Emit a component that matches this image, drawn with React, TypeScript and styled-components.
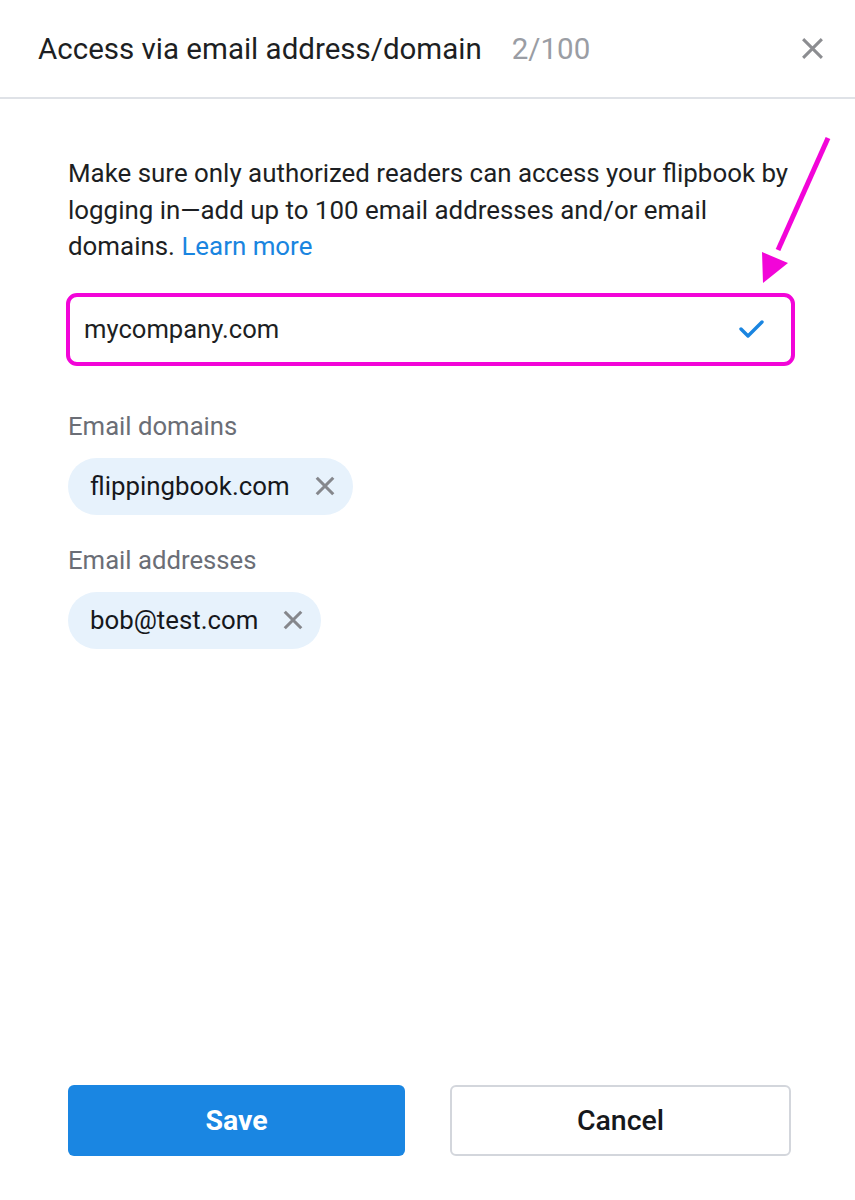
import { createGlobalStyle, styled } from "styled-components";

const GlobalStyle = createGlobalStyle`
  html, body {
    margin: 0;
    padding: 0;
    background: #fff;
  }
  body {
    font-family: Roboto, "Liberation Sans", sans-serif;
    color: #1d1f23;
  }
  * {
    box-sizing: border-box;
  }
`;

const Dialog = styled.div`
  position: relative;
  width: 855px;
  height: 1200px;
  display: flex;
  flex-direction: column;
  background: #fff;
`;

const Header = styled.header`
  height: 99px;
  flex-shrink: 0;
  display: flex;
  align-items: center;
  padding: 0 30px 0 38px;
  border-bottom: 2px solid #dfe2e7;
`;

const Title = styled.h1`
  margin: 0;
  font-size: 29.5px;
  font-weight: 400;
  color: #1d1f23;
`;

const Counter = styled.span`
  margin-left: 30px;
  font-size: 29.5px;
  color: #9a9da4;
`;

const CloseButton = styled.button`
  margin-left: auto;
  border: none;
  background: none;
  padding: 0;
  width: 26px;
  height: 26px;
  display: flex;
  align-items: center;
  justify-content: center;
  color: #8c8d91;
  cursor: pointer;
`;

const Body = styled.main`
  flex: 1;
  display: flex;
  flex-direction: column;
  padding: 56px 50px 0 68px;
`;

const Intro = styled.p`
  margin: 0;
  font-size: 25.9px;
  line-height: 36.5px;
  color: #1d1f23;
`;

const LearnMore = styled.a`
  color: #1a85e0;
  text-decoration: none;
`;

const InputBox = styled.div`
  margin: 28px 0 0 -2px;
  width: 729px;
  height: 73px;
  border: 4px solid #f205d8;
  border-radius: 11px;
  display: flex;
  align-items: center;
  padding: 0 26px 0 14px;
`;

const Input = styled.input`
  flex: 1;
  border: none;
  outline: none;
  background: none;
  font-family: inherit;
  font-size: 25.6px;
  color: #1d1f23;
  padding: 0;
`;

const Label = styled.div<{ $top: number }>`
  margin-top: ${(p) => p.$top}px;
  font-size: 25.7px;
  line-height: 30px;
  color: #6b6e76;
`;

const ChipRow = styled.div`
  margin-top: 17px;
  display: flex;
  gap: 10px;
`;

const Chip = styled.div`
  height: 57px;
  display: inline-flex;
  align-items: center;
  gap: 24px;
  padding: 0 17px 0 22px;
  border-radius: 29px;
  background: #e7f2fc;
  font-size: 25.8px;
  color: #16181c;
`;

const ChipRemove = styled.span`
  display: flex;
  color: #85878c;
`;

const Footer = styled.footer`
  display: flex;
  gap: 45px;
  padding: 0 63px 44px 68px;
`;

const Button = styled.button<{ $primary?: boolean }>`
  flex: 0 0 ${(p) => (p.$primary ? 337 : 341)}px;
  height: 71px;
  border-radius: 6px;
  font-family: inherit;
  font-size: 28.5px;
  font-weight: ${(p) => (p.$primary ? 700 : 500)};
  color: ${(p) => (p.$primary ? "#fff" : "#16181c")};
  background: ${(p) => (p.$primary ? "#1a86e2" : "#fff")};
  border: ${(p) => (p.$primary ? "none" : "2px solid #d3d6dc")};
  cursor: pointer;
`;

const Arrow = styled.svg`
  position: absolute;
  left: 750px;
  top: 130px;
  overflow: visible;
`;

const XIcon = ({ size, stroke }: { size: number; stroke: number }) => (
  <svg width={size} height={size} viewBox="0 0 24 24" fill="none">
    <path
      d="M3 3 L21 21 M21 3 L3 21"
      stroke="currentColor"
      strokeWidth={stroke}
      strokeLinecap="butt"
    />
  </svg>
);

const Check = () => (
  <svg width="26" height="20" viewBox="0 0 26 20" fill="none">
    <path
      d="M2 10 L9 17 L23 3"
      stroke="#1a85e0"
      strokeWidth="3.4"
      strokeLinecap="round"
      strokeLinejoin="round"
    />
  </svg>
);

export default function App() {
  return (
    <>
      <GlobalStyle />
      <Dialog>
        <Header>
          <Title>Access via email address/domain</Title>
          <Counter>2/100</Counter>
          <CloseButton aria-label="Close">
            <XIcon size={25} stroke={2.9} />
          </CloseButton>
        </Header>

        <Body>
          <Intro>
            Make sure only authorized readers can access your flipbook by
            logging in—add up to 100 email addresses and/or email domains.{" "}
            <LearnMore href="#">Learn more</LearnMore>
          </Intro>

          <InputBox>
            <Input defaultValue="mycompany.com" />
            <Check />
          </InputBox>

          <Label $top={45}>Email domains</Label>
          <ChipRow>
            <Chip>
              flippingbook.com
              <ChipRemove>
                <XIcon size={22} stroke={3.4} />
              </ChipRemove>
            </Chip>
          </ChipRow>

          <Label $top={30}>Email addresses</Label>
          <ChipRow>
            <Chip>
              bob@test.com
              <ChipRemove>
                <XIcon size={22} stroke={3.4} />
              </ChipRemove>
            </Chip>
          </ChipRow>
        </Body>

        <Footer>
          <Button $primary>Save</Button>
          <Button>Cancel</Button>
        </Footer>

        <Arrow width="80" height="160" viewBox="0 0 80 160">
          <line x1="78" y1="8" x2="28" y2="120" stroke="#f205d8" strokeWidth="5" />
          <polygon points="13,153 12,122 38,133" fill="#f205d8" />
        </Arrow>
      </Dialog>
    </>
  );
}
